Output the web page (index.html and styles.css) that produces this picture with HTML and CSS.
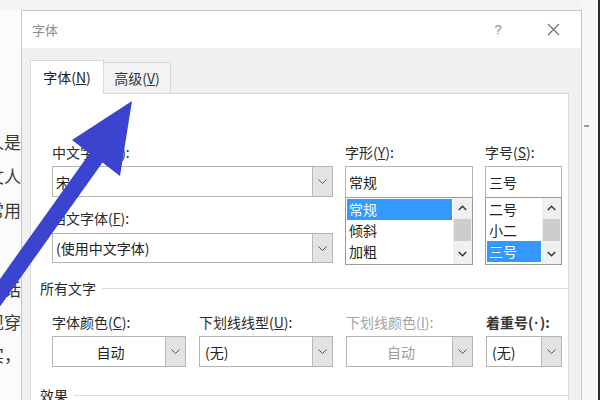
FILE: index.html
```html
<!DOCTYPE html>
<html lang="zh">
<head>
<meta charset="utf-8">
<title>字体</title>
<link rel="stylesheet" href="styles.css">
</head>
<body>
<div class="screen">
  <div class="doc">
    <div class="para p1">
      <div class="dl">个人是</div>
      <div class="dl">散文人</div>
      <div class="dl">非常用</div>
    </div>
    <div class="para p2">
      <div class="dl">的话</div>
      <div class="dl">发现穿</div>
      <div class="dl">其实，</div>
    </div>
  </div>

  <div class="dialog">
    <div class="titlebar">
      <span class="title">字体</span>
      <span class="help">?</span>
      <span class="close"><svg width="13" height="13" viewBox="0 0 13 13"><path d="M1 1L12 12M12 1L1 12" stroke="#6f6f6f" stroke-width="1.2" fill="none"/></svg></span>
    </div>
    <div class="tabs">
      <div class="tab active">字体(<u>N</u>)</div>
      <div class="tab">高级(<u>V</u>)</div>
    </div>
    <div class="pane">
      <div class="fontgrid">
        <div class="col">
          <label class="lbl">中文字体(<u>T</u>):</label>
          <div class="combo c31"><span class="val">宋体</span><span class="btn"><svg width="9" height="5" viewBox="0 0 9 5"><path d="M0.5 0.5L4.5 4.5L8.5 0.5" stroke="#555" fill="none"/></svg></span></div>
          <label class="lbl second">西文字体(<u>F</u>):</label>
          <div class="combo c30"><span class="val">(使用中文字体)</span><span class="btn"><svg width="9" height="5" viewBox="0 0 9 5"><path d="M0.5 0.5L4.5 4.5L8.5 0.5" stroke="#555" fill="none"/></svg></span></div>
        </div>
        <div class="col">
          <label class="lbl">字形(<u>Y</u>):</label>
          <div class="field">常规</div>
          <div class="list">
            <div class="items">
              <div class="item sel">常规</div>
              <div class="item">倾斜</div>
              <div class="item">加粗</div>
            </div>
            <div class="sbar">
              <span class="sbtn"><svg width="9" height="6" viewBox="0 0 9 6"><path d="M0.8 5L4.5 1.2L8.2 5" stroke="#333" stroke-width="1.4" fill="none"/></svg></span>
              <span class="thumb"></span>
              <span class="track"></span>
              <span class="sbtn"><svg width="9" height="6" viewBox="0 0 9 6"><path d="M0.8 1L4.5 4.8L8.2 1" stroke="#333" stroke-width="1.4" fill="none"/></svg></span>
            </div>
          </div>
        </div>
        <div class="col">
          <label class="lbl">字号(<u>S</u>):</label>
          <div class="field">三号</div>
          <div class="list">
            <div class="items">
              <div class="item">二号</div>
              <div class="item">小二</div>
              <div class="item sel">三号</div>
            </div>
            <div class="sbar">
              <span class="sbtn"><svg width="9" height="6" viewBox="0 0 9 6"><path d="M0.8 5L4.5 1.2L8.2 5" stroke="#333" stroke-width="1.4" fill="none"/></svg></span>
              <span class="thumb"></span>
              <span class="track"></span>
              <span class="sbtn"><svg width="9" height="6" viewBox="0 0 9 6"><path d="M0.8 1L4.5 4.8L8.2 1" stroke="#333" stroke-width="1.4" fill="none"/></svg></span>
            </div>
          </div>
        </div>
      </div>

      <div class="section"><span class="stitle">所有文字</span><span class="rule"></span></div>

      <div class="row4">
        <div class="col">
          <label class="lbl">字体颜色(<u>C</u>):</label>
          <div class="combo c31"><span class="val center">自动</span><span class="btn"><svg width="9" height="5" viewBox="0 0 9 5"><path d="M0.5 0.5L4.5 4.5L8.5 0.5" stroke="#555" fill="none"/></svg></span></div>
        </div>
        <div class="col">
          <label class="lbl">下划线线型(<u>U</u>):</label>
          <div class="combo c31"><span class="val pad">(无)</span><span class="btn"><svg width="9" height="5" viewBox="0 0 9 5"><path d="M0.5 0.5L4.5 4.5L8.5 0.5" stroke="#555" fill="none"/></svg></span></div>
        </div>
        <div class="col">
          <label class="lbl disabled">下划线颜色(<u>I</u>):</label>
          <div class="combo c31"><span class="val center disabled">自动</span><span class="btn"><svg width="9" height="5" viewBox="0 0 9 5"><path d="M0.5 0.5L4.5 4.5L8.5 0.5" stroke="#555" fill="none"/></svg></span></div>
        </div>
        <div class="col">
          <label class="lbl strong">着重号(<span class="dot">·</span>):</label>
          <div class="combo c31"><span class="val pad">(无)</span><span class="btn"><svg width="9" height="5" viewBox="0 0 9 5"><path d="M0.5 0.5L4.5 4.5L8.5 0.5" stroke="#555" fill="none"/></svg></span></div>
        </div>
      </div>

      <div class="section s2"><span class="stitle">效果</span><span class="rule"></span></div>
    </div>
  </div>

  <div class="gutter"><span class="tick"></span></div>
  <div class="edge"></div>

  <svg class="arrow" width="600" height="400" viewBox="0 0 600 400">
    <polygon points="132,101 120,176 102.5,162.6 -31,350 -44,340.6 89.5,153.4 72,140" fill="#3a44cf"/>
  </svg>
</div>
</body>
</html>
```

FILE: styles.css
```css
html, body {
  margin: 0;
  padding: 0;
}
body {
  font-family: "Noto Sans CJK SC", "Microsoft YaHei", sans-serif;
  color: #222;
}
.screen {
  width: 600px;
  height: 400px;
  display: flex;
  overflow: hidden;
  position: relative;
  background: #f4f4f4;
}

/* document text behind dialog */
.doc {
  width: 21px;
  flex: none;
  margin-top: 10px;
  background: #fbfbfb;
  overflow: hidden;
  font-family: "Noto Sans CJK SC", serif;
  font-size: 17px;
  color: #3a3a3a;
}
.para.p1 {
  padding-top: 115px;
  line-height: 34px;
}
.para.p2 {
  margin-top: 45px;
  line-height: 33px;
}
.dl {
  display: flex;
  justify-content: flex-end;
  white-space: nowrap;
}

/* dialog */
.dialog {
  width: 561px;
  flex: none;
  margin-top: 10px;
  box-sizing: border-box;
  border: 1px solid #c6c6c6;
  border-bottom: none;
  background: #f0f0f2;
  display: flex;
  flex-direction: column;
}
.titlebar {
  height: 37px;
  background: #fff;
  display: flex;
  align-items: center;
  flex: none;
}
.title {
  padding-left: 10px;
  font-size: 13px;
  color: #8c8c8c;
}
.help {
  margin-left: auto;
  width: 12px;
  text-align: center;
  font-size: 13px;
  color: #8a8a8a;
  font-family: "Liberation Sans", sans-serif;
}
.close {
  width: 24px;
  margin-left: 37px;
  margin-right: 16px;
  display: flex;
  justify-content: center;
}

.tabs {
  height: 45px;
  flex: none;
  display: flex;
  align-items: flex-end;
  padding-left: 8px;
}
.tab {
  box-sizing: border-box;
  height: 31px;
  width: 67px;
  display: flex;
  align-items: center;
  justify-content: center;
  font-size: 14px;
  color: #333;
  background: #f3f3f5;
  border: 1px solid #d9d9d9;
  border-left: none;
  border-bottom: none;
}
.tab.active {
  position: relative;
  width: 74px;
  height: 34px;
  margin-bottom: -1px;
  padding-bottom: 1px;
  background: #fff;
  border-left: 1px solid #d9d9d9;
  color: #1e1e1e;
}

.pane {
  flex: 1;
  margin-left: 8px;
  width: 539px;
  box-sizing: border-box;
  background: #fff;
  border: 1px solid #d9d9d9;
  border-bottom: none;
}

.fontgrid {
  margin: 50px 0 0 21px;
  display: grid;
  grid-template-columns: 281px 128px 77px;
  column-gap: 12px;
  align-items: start;
}
.col {
  display: flex;
  flex-direction: column;
}
.lbl {
  display: block;
  height: 16px;
  line-height: 16px;
  font-size: 14px;
  color: #2a2a2a;
  margin-bottom: 6px;
  white-space: nowrap;
}
.lbl.second {
  margin-top: 13px;
  margin-bottom: 7px;
}
.lbl.disabled {
  color: #a3a3a3;
}
.lbl.strong {
  font-weight: 700;
  color: #333;
}
.dot {
  font-family: "Liberation Sans", sans-serif;
  font-weight: 700;
  padding: 0 1px;
}

.combo {
  box-sizing: border-box;
  display: flex;
  border: 1px solid #b4b4b4;
  background: #fff;
}
.combo.c31 { height: 31px; }
.combo.c30 { height: 30px; }
.val {
  flex: 1;
  display: flex;
  align-items: center;
  padding-left: 3px;
  font-size: 14px;
  color: #222;
  white-space: nowrap;
  overflow: hidden;
}
.val.center {
  justify-content: center;
}
.val.pad {
  padding-left: 5px;
}
.val.disabled {
  color: #9d9d9d;
}
.btn {
  width: 19px;
  flex: none;
  background: #e3e3e3;
  border-left: 1px solid #b9b9b9;
  display: flex;
  align-items: center;
  justify-content: center;
}

.field {
  box-sizing: border-box;
  height: 32px;
  border: 1px solid #b4b4b4;
  border-bottom-color: #9a9a9a;
  display: flex;
  align-items: center;
  padding-left: 3px;
  font-size: 14px;
  color: #222;
}
.list {
  box-sizing: border-box;
  height: 67px;
  border: 1px solid #9a9a9a;
  border-top: none;
  display: flex;
}
.items {
  flex: 1;
  padding: 1px;
}
.item {
  height: 21px;
  line-height: 21px;
  padding-left: 2px;
  font-size: 14px;
  color: #222;
}
.item.sel {
  background: #3399ff;
  color: #fff;
}
.sbar {
  width: 19px;
  flex: none;
  background: #f0f0f0;
  display: flex;
  flex-direction: column;
}
.sbtn {
  height: 20px;
  display: flex;
  align-items: center;
  justify-content: center;
  flex: none;
}
.thumb {
  height: 22px;
  margin: 1px 1px 0;
  background: #cdcdcd;
  flex: none;
}
.track {
  flex: 1;
}

.section {
  display: flex;
  align-items: center;
  margin: 15px 0 0 9px;
  height: 16px;
}
.section.s2 {
  margin-top: 20px;
}
.stitle {
  font-size: 14px;
  line-height: 16px;
  color: #2a2a2a;
  white-space: nowrap;
}
.rule {
  flex: 1;
  height: 1px;
  margin-left: 6px;
  background: #dcdcdc;
}

.row4 {
  margin: 18px 0 0 21px;
  display: grid;
  grid-template-columns: 134px 134px 127px 76px;
  column-gap: 13px;
}

.gutter {
  width: 16px;
  flex: none;
  background: #f7f7f7;
}
.tick {
  display: block;
  margin: 125px 0 0 2px;
  width: 5px;
  height: 2px;
  background: #9a9a9a;
}
.edge {
  width: 2px;
  flex: none;
  background: #2e2e2e;
}

.arrow {
  position: absolute;
  left: 0;
  top: 0;
  pointer-events: none;
}
```
